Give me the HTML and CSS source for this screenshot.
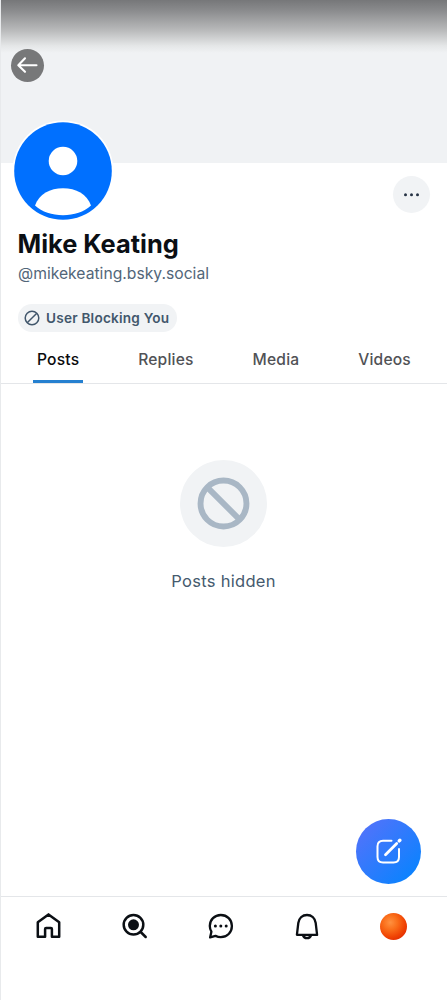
FILE: index.html
```html
<!DOCTYPE html>
<html lang="en">
<head>
<meta charset="utf-8">
<title>Mike Keating</title>
<link rel="stylesheet" href="styles.css">
</head>
<body>
<div class="app">
  <header class="banner">
    <button class="back" aria-label="Back">
      <svg width="33" height="33" viewBox="0 0 33 33" fill="none" stroke="#fff" stroke-width="2.1" stroke-linecap="round" stroke-linejoin="round"><path d="M25.5 16.2H7.5M14 9.3L7.3 16.2L14 22.8"/></svg>
    </button>
  </header>
  <section class="profile">
    <div class="top-row">
      <svg class="avatar" width="102" height="102" viewBox="0 0 102 102">
        <circle cx="51" cy="51" r="50.5" fill="#fff"/>
        <circle cx="51" cy="51" r="48.8" fill="#0070ff"/>
        <circle cx="51" cy="41" r="14.3" fill="#fff"/>
        <path d="M23 85.5C27 74 38 68.3 51 68.3S75 74 79 85.5C72 92 62 95.2 51 95.2S30 92 23 85.5Z" fill="#fff"/>
      </svg>
      <button class="more" aria-label="More options">
        <svg width="37" height="37" viewBox="0 0 37 37" fill="#263244"><circle cx="12.5" cy="18.7" r="1.5"/><circle cx="18.5" cy="18.7" r="1.5"/><circle cx="24.5" cy="18.7" r="1.5"/></svg>
      </button>
    </div>
    <h1 class="name">Mike Keating</h1>
    <p class="handle">@mikekeating.bsky.social</p>
    <div class="label">
      <svg width="16" height="16" viewBox="0 0 16 16" fill="none" stroke="#42576c" stroke-width="1.5"><circle cx="8" cy="8" r="6.8"/><path d="M12.8 3.2L3.2 12.8"/></svg>
      <span class="label-text">User Blocking You</span>
    </div>
  </section>
  <nav class="tabs">
    <a class="tab active"><span class="tab-text">Posts</span></a>
    <a class="tab"><span class="tab-text">Replies</span></a>
    <a class="tab"><span class="tab-text">Media</span></a>
    <a class="tab"><span class="tab-text">Videos</span></a>
  </nav>
  <main class="empty">
    <div class="empty-icon">
      <svg width="53" height="53" viewBox="0 0 54 54" fill="none" stroke="#a9b7c5" stroke-width="6"><circle cx="27" cy="27" r="23.4"/><path d="M10.8 10.8L43.2 43.2"/></svg>
    </div>
    <p class="empty-text">Posts hidden</p>
  </main>
  <button class="compose" aria-label="New post">
    <svg width="30" height="30" viewBox="0 0 30 30" fill="none" stroke="#fff" stroke-width="2" stroke-linecap="round"><path d="M17.5 3.8H9Q3.5 3.8 3.5 9.3V20Q3.5 25.5 9 25.5H19.5Q25 25.5 25 20V12"/><path d="M11.5 17.8L22.7 6.6" stroke-width="2.8"/><path d="M25.2 3.9L25.9 3.2" stroke-width="3.4"/></svg>
  </button>
  <nav class="bottom">
    <a class="item" aria-label="Home"><svg width="30" height="30" viewBox="0 0 30 30" fill="none" stroke="#0b0f14" stroke-width="2.5" stroke-linejoin="round"><path d="M15.5 3.4L26.2 11.3V25.8H18.9V18Q18.9 17 17.9 17H13.1Q12.1 17 12.1 18V25.8H4.8V11.3Z"/></svg></a>
    <a class="item" aria-label="Search"><svg width="30" height="30" viewBox="0 0 30 30" fill="none" stroke="#0b0f14" stroke-width="2.5" stroke-linecap="round"><circle cx="13.5" cy="13.8" r="9.8"/><circle cx="13.5" cy="13.8" r="5.5" fill="#0b0f14" stroke="none"/><path d="M20.7 21L25.7 26"/></svg></a>
    <a class="item" aria-label="Chat"><svg width="30" height="30" viewBox="0 0 30 30" fill="none" stroke="#0b0f14" stroke-width="2.3" stroke-linejoin="round"><path d="M14.8 4C8.6 4 3.8 8.8 3.8 15C3.8 17.1 4.4 19 5.4 20.7L4.1 26.4L9.5 24.9C11.1 25.7 12.9 26.2 14.8 26.2C21.1 26.2 25.9 21.3 25.9 15S21.1 4 14.8 4Z"/><g fill="#0b0f14" stroke="none"><circle cx="9.4" cy="15" r="1.5"/><circle cx="14.8" cy="15" r="1.5"/><circle cx="20.2" cy="15" r="1.5"/></g></svg></a>
    <a class="item" aria-label="Notifications"><svg width="30" height="30" viewBox="0 0 30 30" fill="none" stroke="#0b0f14" stroke-width="2.3" stroke-linejoin="round"><path d="M4.9 23.8L6.3 12C7 7 10.5 4 15 4S23 7 23.7 12L25.1 23.8Z"/><path d="M10.8 24Q12 27.2 15 27.2T19.2 24"/></svg></a>
    <a class="item" aria-label="Profile"><span class="orb"></span></a>
  </nav>
</div>
</body>
</html>
```
FILE: styles.css
```css
* { box-sizing: border-box; }
body { margin: 0; background: #fff; font-family: Inter, "Liberation Sans", sans-serif; }
h1, p { margin: 0; }
button { border: 0; padding: 0; display: block; }
svg { display: block; flex: none; }
.app { position: relative; height: 1000px; display: flex; flex-direction: column; border-left: 1px solid #e8eaec; overflow: hidden; }
.banner { flex: none; height: 163px; padding: 49px 0 0 10px; background: linear-gradient(#767779 0, #898a8c 10px, #b8b9ba 30px, #e5e7e8 46px, #f0f2f4 53px); }
.back { width: 33px; height: 33px; border-radius: 50%; background: #777879; }
.profile { flex: none; height: 172px; padding: 0 17.5px 0 17px; }
.top-row { display: flex; justify-content: space-between; align-items: flex-start; height: 64px; }
.avatar { margin: -43px 0 0 -6px; }
.more { width: 37px; height: 37px; margin-top: 13px; border-radius: 50%; background: #f1f3f5; }
.name { height: 34px; margin-left: -.5px; font-size: 25.4px; line-height: 34px; font-weight: 700; color: #0b0f14; white-space: nowrap; }
.handle { height: 24px; font-size: 15.7px; line-height: 25px; color: #526679; white-space: nowrap; }
.label { display: inline-flex; align-items: center; gap: 6px; height: 28px; margin: 19px 0 0 -.5px; padding: 0 8px 0 6.5px; border-radius: 14px; background: #f1f3f5; }
.label-text { font-size: 13.6px; line-height: 20px; font-weight: 600; letter-spacing: .22px; color: #42576c; white-space: nowrap; }
.tabs { flex: none; display: flex; justify-content: space-between; height: 49px; padding: 0 32px 0 32px; border-bottom: 1px solid #e4e6e9; }
.tab { display: flex; padding: 0 4px; height: 48px; color: #515256; }
.tab-text { font-size: 15.6px; line-height: 49px; font-weight: 550; letter-spacing: .2px; }
.active { color: #0b0b0d; border-bottom: 3px solid #2580d0; }
.empty { flex: 1; display: flex; flex-direction: column; align-items: center; padding: 76px 1px 0 0; }
.empty-icon { width: 87px; height: 87px; border-radius: 50%; background: #f1f3f5; display: grid; place-items: center; }
.empty-text { margin-top: 22px; font-size: 16.5px; line-height: 24px; letter-spacing: .3px; color: #455a6e; }
.compose { position: absolute; right: 26px; top: 819px; width: 65px; height: 65px; border-radius: 50%; background: linear-gradient(135deg, #5a71fa, #0085ff); display: grid; place-items: center; }
.bottom { flex: none; height: 104px; padding: 14px 10px 0 4px; display: flex; border-top: 1px solid #e4e6e9; }
.item { flex: 1; height: 30px; display: flex; justify-content: center; align-items: center; }
.orb { width: 27px; height: 27px; border-radius: 50%; background: radial-gradient(circle at 38% 35%, #ff9140 0, #fa6e1a 30%, #f04404 60%, #df2600 85%, #e76b2d 100%); }
```
